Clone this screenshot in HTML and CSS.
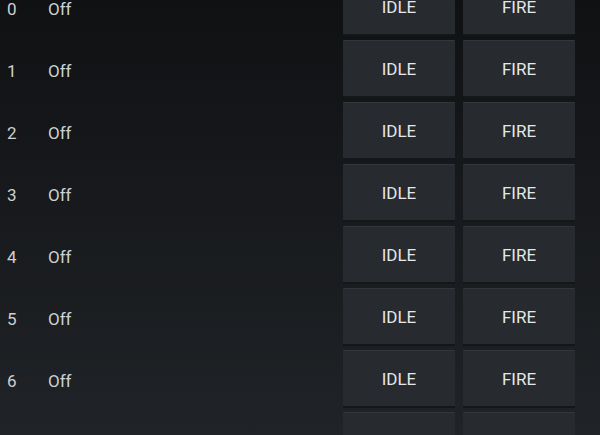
FILE: index.html
```html
<!DOCTYPE html>
<html>
<head>
<meta charset="utf-8">
<link rel="stylesheet" href="styles.css">
</head>
<body>
<div class="list">
  <div class="row"><span class="num">0</span><span class="state">Off</span><div class="btns"><button class="btn">IDLE</button><button class="btn">FIRE</button></div></div>
  <div class="row"><span class="num">1</span><span class="state">Off</span><div class="btns"><button class="btn">IDLE</button><button class="btn">FIRE</button></div></div>
  <div class="row"><span class="num">2</span><span class="state">Off</span><div class="btns"><button class="btn">IDLE</button><button class="btn">FIRE</button></div></div>
  <div class="row"><span class="num">3</span><span class="state">Off</span><div class="btns"><button class="btn">IDLE</button><button class="btn">FIRE</button></div></div>
  <div class="row"><span class="num">4</span><span class="state">Off</span><div class="btns"><button class="btn">IDLE</button><button class="btn">FIRE</button></div></div>
  <div class="row"><span class="num">5</span><span class="state">Off</span><div class="btns"><button class="btn">IDLE</button><button class="btn">FIRE</button></div></div>
  <div class="row"><span class="num">6</span><span class="state">Off</span><div class="btns"><button class="btn">IDLE</button><button class="btn">FIRE</button></div></div>
  <div class="row"><span class="num">7</span><span class="state">Off</span><div class="btns"><button class="btn">IDLE</button><button class="btn">FIRE</button></div></div>
</div>
</body>
</html>
```

FILE: styles.css
```css
html, body {
  margin: 0;
  padding: 0;
  height: 100%;
  overflow: hidden;
}
body {
  background: linear-gradient(to bottom, #0f1113 0%, #17191c 45%, #202327 100%);
  font-family: Roboto, "Noto Sans", sans-serif;
  color: #cfd0d1;
}
.list {
  margin-top: -24px;
  display: flex;
  flex-direction: column;
}
.row {
  height: 62px;
  display: flex;
  align-items: center;
  font-size: 17px;
}
.num {
  width: 48px;
  padding-left: 7px;
  padding-top: 3px;
  box-sizing: border-box;
}
.state {
  flex: 1;
  padding-top: 3px;
}
.btns {
  display: flex;
  gap: 8px;
  padding-right: 25px;
}
.btn {
  width: 112px;
  height: 58px;
  margin: 0;
  padding: 0;
  border: none;
  border-top: 1px solid #33373b;
  border-bottom: 2px solid #141618;
  background: #272a2e;
  color: #e6e7e8;
  font-family: Roboto, "Noto Sans", sans-serif;
  font-size: 17px;
  border-radius: 1px;
}
```
